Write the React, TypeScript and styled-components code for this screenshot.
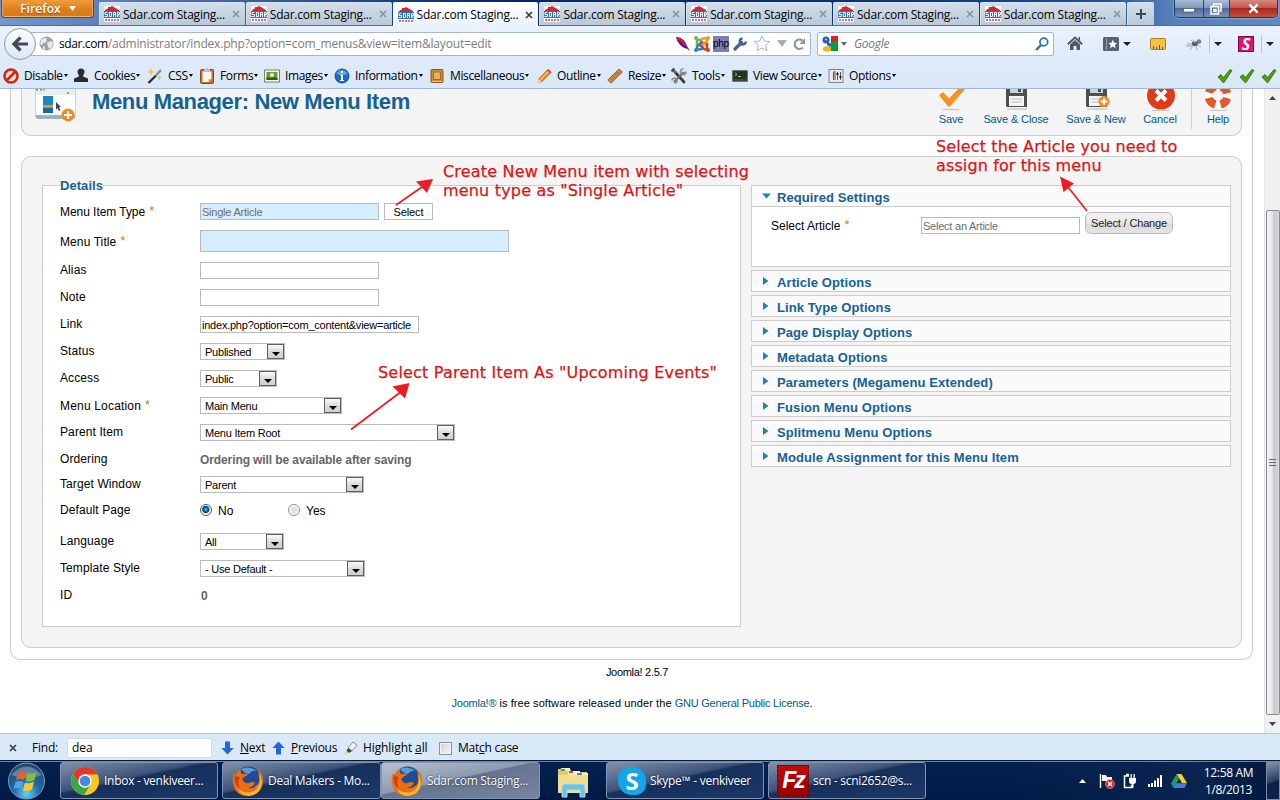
import React from "react";
import styled, { createGlobalStyle, css } from "styled-components";

const UI = `"Open Sans", "Noto Sans", sans-serif`;
const PAGE = `"Liberation Sans", Arial, sans-serif`;

const Global = createGlobalStyle`
  * { box-sizing: border-box; }
  body { margin: 0; background: #fff; overflow: hidden; }
  svg { display: block; flex: none; }
`;

const Screen = styled.div`
  position: relative;
  width: 1280px;
  height: 800px;
  overflow: hidden;
  display: flex;
  flex-direction: column;
  font: 12px/16px ${UI};
  color: #000;
`;

/* ---------- Title bar ---------- */

const TitleBar = styled.div`
  flex: none;
  height: 26px;
  display: flex;
  align-items: flex-start;
  background: linear-gradient(90deg, #7697c8 0, #5f84bd 90px, #2d5594 300px, #04276b 500px, #0b3478 900px, #1d4f97 1100px, #5680ba 1170px, #6289c0 1280px);
  border-bottom: 1px solid #4d6c96;
`;

const FirefoxButton = styled.div`
  width: 93px;
  height: 18px;
  flex: none;
  margin: 0 5px 0 1px;
  padding-left: 18px;
  display: flex;
  align-items: center;
  gap: 8px;
  border: 1px solid #7c3f0c;
  border-top: 0;
  border-radius: 0 0 4px 4px;
  background: linear-gradient(#ee9b3c, #dd7d19 60%, #d9791a);
  box-shadow: inset 0 -1px 0 #f4b566, inset 1px 0 0 #f0a850, inset -1px 0 0 #f0a850;
  color: #fff;
  font-weight: 600;
  letter-spacing: 0.1px;
  text-shadow: 0 1px 1px #8a4a0a;
`;

const Tab = styled.div<{ $active?: boolean }>`
  width: 145.8px;
  flex: none;
  height: ${(p) => (p.$active ? 24 : 23)}px;
  margin: 2px 1px 0 0;
  padding: 0 5px 0 4px;
  display: flex;
  align-items: center;
  border: 1px solid ${(p) => (p.$active ? "#fff" : "#dbe4ee")};
  border-width: 1px 0 0 1px;
  border-radius: 2px 2px 0 0;
  background: ${(p) => (p.$active ? "linear-gradient(#ffffff, #eaf2fc)" : "linear-gradient(#d2deea, #b9c9da)")};
  svg:last-child { opacity: ${(p) => (p.$active ? 1 : 0.42)}; }
`;
const TabTitle = styled.span`
  flex: 1;
  margin-left: 3px;
  white-space: nowrap;
  letter-spacing: -0.23px;
  padding-top: 1px;
`;
const NewTab = styled(Tab)`
  width: 27px;
  padding: 0 0 1px 7px;
  svg:last-child { opacity: 1; }
`;
const WindowControls = styled.div`
  display: flex;
  height: 18px;
  flex: none;
  margin-left: 19px;
  border: 1px solid #20375d;
  border-top: 0;
  border-radius: 0 0 5px 5px;
  overflow: hidden;
  box-shadow: 0 0 2px #cfe0f5;
`;
const ControlButton = styled.div<{ $w: number; $close?: boolean }>`
  width: ${(p) => p.$w}px;
  display: flex;
  align-items: center;
  justify-content: center;
  border-right: 1px solid #2d4569;
  background: ${(p) => (p.$close ? "linear-gradient(#d68a80, #c4594a 45%, #a8281a 50%, #c2503f)" : "linear-gradient(#a9bcd8, #8298ba 45%, #4f6c97 50%, #7890b5)")};
  &:last-child { border: 0; }
`;

/* ---------- Navigation bar ---------- */

const NavBar = styled.div`
  flex: none;
  height: 35px;
  display: flex;
  align-items: center;
  padding-left: 4px;
  background: linear-gradient(#eaf2fd, #deeafa);
`;
const BackButton = styled.div`
  position: relative;
  z-index: 1;
  width: 32px;
  height: 32px;
  flex: none;
  margin: 1px -6px 0 0;
  border-radius: 50%;
  border: 1px solid #8a99ad;
  background: linear-gradient(#fbfdff, #dde7f2);
  display: flex;
  align-items: center;
  justify-content: center;
`;
const Field = styled.div<{ $w: number }>`
  width: ${(p) => p.$w}px;
  height: 24px;
  display: flex;
  align-items: center;
  background: #fff;
  border: 1px solid #a5b7cd;
  border-radius: 2px;
`;
const UrlField = styled(Field)`
  margin-right: 6px;
  padding: 0 4px 0 8px;
`;
const UrlText = styled.span`
  flex: 1;
  margin-left: 5px;
  padding-top: 1px;
  color: #7c7c7c;
  letter-spacing: -0.175px;
  white-space: nowrap;
`;
const Host = styled.span`
  color: #000;
  letter-spacing: -0.4px;
`;
const UrlIcons = styled.div`
  display: flex;
  align-items: center;
  gap: 3px;
`;
const SearchField = styled(Field)`
  padding: 0 4px;
  margin-right: 13px;
`;
const SearchHint = styled.span`
  flex: 1;
  margin-left: 7px;
  padding-top: 1px;
  font-style: italic;
  color: #777;
  letter-spacing: -0.3px;
`;
const NavIcon = styled.div<{ $ml?: number }>`
  margin-left: ${(p) => p.$ml ?? 0}px;
`;
const NavSep = styled.div<{ $ml: number; $mr: number }>`
  width: 1px;
  height: 18px;
  background: #b9c5d4;
  margin: 0 ${(p) => p.$mr}px 0 ${(p) => p.$ml}px;
`;

/* ---------- Developer toolbar ---------- */

const DevBar = styled.div`
  flex: none;
  height: 28px;
  display: flex;
  align-items: center;
  padding: 2px 0 0 3px;
  background: linear-gradient(#deeafa, #d9e8f7);
  border-bottom: 1px solid #a3bad6;
`;
const DevItem = styled.div<{ $w: number }>`
  width: ${(p) => p.$w}px;
  flex: none;
  display: flex;
  align-items: center;
  white-space: nowrap;
  letter-spacing: -0.36px;
`;
const DevLabel = styled.span`
  margin: 0 1px 0 5px;
`;
const Checks = styled.div`
  display: flex;
  gap: 6px;
  margin-left: auto;
  padding-right: 3px;
`;

/* ---------- Page ---------- */

const Viewport = styled.div`
  height: 644px;
  flex: none;
  display: flex;
  background: #fff;
  font-family: ${PAGE};
  line-height: 14px;
`;
const Scroller = styled.div`
  flex: 1;
  overflow: hidden;
`;
const PageBox = styled.div`
  width: 1243px;
  height: 571px;
  margin-left: 10px;
  border: 1px solid #ccc;
  border-top: 0;
  border-radius: 0 0 10px 10px;
  padding: 0 10px;
  background: linear-gradient(#fafafa 0 47px, #fff 47px);
`;
const Header = styled.div`
  height: 47px;
  display: flex;
  border: 1px solid #ccc;
  border-top: 0;
  border-radius: 0 0 10px 10px;
  background: #f4f4f4;
  padding: 0 3px 0 12px;
`;
const PageTitle = styled.h1`
  margin: 0 auto 0 14px;
  font: bold 22px/26px ${PAGE};
  letter-spacing: -0.36px;
  color: #146295;
`;
const ToolButton = styled.div<{ $w: number }>`
  width: ${(p) => p.$w}px;
  display: flex;
  flex-direction: column;
  align-items: center;
  font-size: 11px;
  letter-spacing: -0.12px;
  color: #025a8d;
  white-space: nowrap;
`;
const ToolSep = styled.div`
  width: 1px;
  height: 40px;
  background: #ccc;
  margin: 0 6px 0 7px;
`;
const Main = styled.div`
  display: flex;
  align-items: flex-start;
  gap: 10px;
  height: 492px;
  margin-top: 20px;
  padding: 21px 0 0 20px;
  border: 1px solid #ccc;
  border-radius: 10px;
  background: #f4f4f4;
`;
const Details = styled.fieldset`
  width: 699px;
  height: 449px;
  margin: 0;
  padding: 6px 17px 0;
  border: 1px solid #ccc;
  background: #fff;
`;
const Legend = styled.legend`
  height: 14px;
  padding: 0;
  font: bold 13px/15px ${PAGE};
  letter-spacing: 0.05px;
  color: #146295;
`;
const FormRow = styled.div<{ $h: number; $up?: number }>`
  height: ${(p) => p.$h}px;
  padding-bottom: ${(p) => p.$up ?? 0}px;
  display: flex;
  align-items: center;
`;
const Label = styled.label<{ $w?: number; $ls?: number; $req?: boolean }>`
  width: ${(p) => p.$w ?? 140}px;
  flex: none;
  font-size: 12px;
  letter-spacing: ${(p) => p.$ls ?? 0.1}px;
  padding: ${(p) => (p.$req ? "1px 0 0" : "0 0 1px")};
`;
const Star = styled.span`
  color: #e77600;
  margin-left: 4px;
  font-size: 13px;
  line-height: 0;
  vertical-align: 1px;
  letter-spacing: 0;
`;
const inputFont = css`
  font: 11px/15px ${PAGE};
  letter-spacing: -0.23px;
  white-space: nowrap;
`;
const TextBox = styled.div<{ $w: number; $h?: number; $req?: boolean; $muted?: boolean }>`
  ${inputFont}
  width: ${(p) => p.$w}px;
  height: ${(p) => p.$h ?? 17}px;
  padding: 1px 1px 0;
  border: 1px solid #bbb;
  background: ${(p) => (p.$req ? "#d5eeff" : "#fff")};
  color: ${(p) => (p.$muted ? "#6d6d6d" : "#000")};
`;
const PlainButton = styled.div`
  ${inputFont}
  letter-spacing: -0.1px;
  width: 49px;
  height: 17px;
  margin-left: 5px;
  border: 1px solid #bbb;
  background: #fff;
  text-align: center;
  padding-top: 1px;
`;
const SelectBox = styled.div<{ $w: number }>`
  ${inputFont}
  width: ${(p) => p.$w}px;
  height: 17px;
  padding-left: 4px;
  display: flex;
  align-items: center;
  justify-content: space-between;
  border: 1px solid #bbb;
`;
const SelectText = styled.span`
  padding-top: 2px;
`;
const DropArrow = styled.span`
  width: 17px;
  height: 15px;
  border: 1px solid #5f5f5f;
  background: linear-gradient(#fafafa, #dcdcdc 50%, #cfcfcf);
  display: flex;
  align-items: center;
  justify-content: center;
  padding-top: 4px;
`;
const Muted = styled.span<{ $ls: number; $pl?: number }>`
  padding: 1px 0 0 ${(p) => p.$pl ?? 0}px;
  font-weight: bold;
  font-size: 12px;
  color: #666;
  letter-spacing: ${(p) => p.$ls}px;
`;
const Radio = styled.span<{ $on?: boolean }>`
  width: 12px;
  height: 12px;
  margin-top: -1px;
  border-radius: 50%;
  border: 1px solid ${(p) => (p.$on ? "#4b5a68" : "#8e8f8f")};
  background: ${(p) =>
    p.$on
      ? "radial-gradient(circle at 48% 45%, #6cd2f5 0, #167cb4 1.6px, #0b3f63 3.2px, #e4ebee 4px, #fff 5px)"
      : "radial-gradient(circle at 50% 50%, #dadada 0, #e6e6e6 3px, #fff 5px)"};
`;
const RadioLabel = styled.span<{ $w: number }>`
  width: ${(p) => p.$w}px;
  padding-left: 6px;
`;

const Side = styled.div`
  width: 480px;
  margin-top: 7px;
  display: flex;
  flex-direction: column;
  gap: 3px;
`;
const Panel = styled.div<{ $open?: boolean }>`
  height: ${(p) => (p.$open ? 82 : 22)}px;
  border: 1px solid #ccc;
  background: ${(p) => (p.$open ? "#fff" : "#fafafa")};
`;
const PanelHead = styled.div<{ $open?: boolean }>`
  height: ${(p) => (p.$open ? 21 : 20)}px;
  display: flex;
  align-items: center;
  padding: 1px 0 0 10px;
  background: #fafafa;
  border-bottom: ${(p) => (p.$open ? "1px solid #ccc" : "0")};
`;
const PanelTitle = styled.span`
  margin-left: 6px;
  font: bold 13px/17px ${PAGE};
  letter-spacing: 0.09px;
  color: #146295;
  padding-top: 1px;
`;
const PanelRow = styled.div`
  display: flex;
  align-items: center;
  height: 37px;
  padding: 10px 0 10px 19px;
`;
const RoundButton = styled.div`
  width: 88px;
  height: 22px;
  margin: -5px 0 0 5px;
  border: 1px solid #bbb;
  border-radius: 6px;
  background: linear-gradient(#f2f2f2, #e9e9e9 50%, #dbdbdb 55%, #e4e4e4);
  font-size: 11px;
  line-height: 21px;
  letter-spacing: -0.15px;
  text-align: center;
  color: #222;
`;
const Footer = styled.div`
  width: 1264px;
  padding-top: 5px;
  text-align: center;
  font-size: 11px;
`;
const Version = styled.p`
  margin: 0 0 17px 10px;
  letter-spacing: -0.3px;
`;
const License = styled.p`
  margin: 0;
  letter-spacing: 0.08px;
`;
const Link = styled.a`
  color: #025a8d;
  letter-spacing: -0.23px;
`;

const ScrollBar = styled.div`
  width: 16px;
  height: 644px;
  display: flex;
  flex-direction: column;
  align-items: center;
  background: #f0f0f0;
  border-left: 1px solid #e6e6e6;
`;
const ScrollEnd = styled.div<{ $h: number }>`
  height: ${(p) => p.$h}px;
  padding-top: 7px;
`;
const Thumb = styled.div`
  width: 14px;
  height: 505px;
  border: 1px solid #8b8b8f;
  border-radius: 2px;
  background: linear-gradient(90deg, #f5f5f6, #e6e6e9 45%, #c9c9ce 55%, #d8d8dc);
  display: flex;
  align-items: center;
  justify-content: center;
`;

/* ---------- Find bar ---------- */

const FindBar = styled.div`
  flex: none;
  height: 27px;
  border-top: 1px solid #b7c3d0;
  background: #dae9f8;
  display: flex;
  align-items: center;
  padding: 2px 0 0 9px;
  white-space: nowrap;
`;
const FindText = styled.span<{ $w: number; $pl?: number; $ls?: number }>`
  width: ${(p) => p.$w}px;
  padding-left: ${(p) => p.$pl ?? 0}px;
  letter-spacing: ${(p) => p.$ls ?? -0.25}px;
`;
const FindInput = styled.div`
  width: 145px;
  height: 20px;
  margin-right: 9px;
  padding: 1px 4px;
  border: 1px solid #d4dbe3;
  border-radius: 2px;
  background: #fff;
`;
const CheckBox = styled.div`
  width: 13px;
  height: 13px;
  margin: 0 6px 0 -2px;
  border: 1px solid #8e8f8f;
  background: linear-gradient(135deg, #cfd3d7, #f4f4f4);
  box-shadow: inset 0 0 0 1px #f4f4f4;
`;

/* ---------- Task bar ---------- */

const TaskBar = styled.div`
  flex: none;
  height: 40px;
  display: flex;
  background: linear-gradient(90deg, rgba(0, 24, 66, 0) 1000px, #0a2450 1200px, #001840), linear-gradient(#03214f, #001a45);
  border-top: 1px solid #0a1a33;
  box-shadow: inset 0 1px 0 #6f87ab;
  color: #fff;
`;
const Start = styled.div`
  width: 60px;
  padding: 1px 0 0 7px;
`;
const Task = styled.div<{ $w: number; $mr?: number; $active?: boolean }>`
  width: ${(p) => p.$w}px;
  height: 37px;
  margin: 1px ${(p) => p.$mr ?? 0}px 0 0;
  padding-left: 9px;
  display: flex;
  align-items: center;
  gap: 4px;
  border: 1px solid #7f93b3;
  border-radius: 3px;
  background: ${(p) =>
    p.$active
      ? "linear-gradient(168deg, #b8c1cf 0, #8d9ab0 45%, #66758f 47%, #7684a0 100%)"
      : "linear-gradient(168deg, #8190aa 0, #3c5379 42%, #17305c 46%, #1c3868 100%)"};
  white-space: nowrap;
  letter-spacing: -0.28px;
  text-shadow: 0 0 2px #001a45;
`;
const Explorer = styled.div`
  width: 66px;
  padding: 5px 0 0 16px;
`;
const Tray = styled.div`
  margin-left: auto;
  display: flex;
  align-items: center;
`;
const TrayIcon = styled.div<{ $ml: number }>`
  margin-left: ${(p) => p.$ml}px;
`;
const Clock = styled.div`
  width: 79px;
  padding-left: 4px;
  text-align: center;
  line-height: 17px;
  letter-spacing: -0.35px;
`;
const ShowDesktop = styled.div`
  width: 14px;
  height: 38px;
  border: 1px solid #7d8ba3;
  background: linear-gradient(160deg, #8592a8, #2b3f63 50%, #0e2248 55%);
`;

/* ---------- Annotations lying over the page ---------- */

const Note = styled.div<{ $x: number; $y: number; $ls: number }>`
  position: absolute;
  left: ${(p) => p.$x}px;
  top: ${(p) => p.$y}px;
  font: 16px/19px "DejaVu Sans", Verdana, sans-serif;
  letter-spacing: ${(p) => p.$ls}px;
  -webkit-text-stroke: 0.25px #dc1414;
  white-space: pre;
  color: #dc1414;
`;
const Arrows = styled.svg`
  position: absolute;
  left: 0;
  top: 0;
  pointer-events: none;
`;

/* ---------- Icons ---------- */

const Favicon = () => (
  <svg width="16" height="16" viewBox="0 0 16 16">
    <path fill="#fff" d="M0 0h16v16H0z" />
    <path fill="#cc2936" d="M8 0l7 4v1H1V4zM4 1h2v3H4z" />
    <path fill="#2a76c8" d="M0 5h16v7H0z" />
    <path stroke="#fff" fill="none" strokeWidth=".9" d="M3.500 6.500H1v2h2.500v2H.5M5.500 6v5M5.500 6.500h2v4h-2M9.500 11V6.500h2V11M9.500 8.500h2M13.500 11V6.500h2v2h-2l2 2.500" />
    <path stroke="#d8404c" strokeWidth="1.600" strokeDasharray="2 1" d="M1 14h14" />
  </svg>
);
const Cross = ({ c = "#3d3d3d", s = 8 }: { c?: string; s?: number }) => (
  <svg width={s} height={s} viewBox="0 0 8 8">
    <path d="M1 1l6 6M7 1L1 7" stroke={c} strokeWidth="1.700" />
  </svg>
);
const Tri = ({ w = 7, h = 4, c = "#222", up = false }: { w?: number; h?: number; c?: string; up?: boolean }) => (
  <svg width={w} height={h} viewBox="0 0 10 10" preserveAspectRatio="none">
    <path d={up ? "M0 10h10L5 0z" : "M0 0h10L5 10z"} fill={c} />
  </svg>
);
const BackArrow = () => (
  <svg width="18" height="18" viewBox="0 0 18 18">
    <path d="M9.500 2.500L3 9l6.500 6.500M3.500 9H17" fill="none" stroke="#414b57" strokeWidth="3.200" />
  </svg>
);
const Globe = () => (
  <svg width="15" height="15" viewBox="0 0 15 15">
    <circle cx="7.500" cy="7.500" r="7" fill="#a2a2a2" />
    <path fill="#e9e9e9" d="M2 4l3-2 3 0-1 2 1 1-2 2-2 0-1 2-2-1zM9 6l4-1 1 3-2 4-2 1-1-3-1-2zM4 10l2 1 0 3-2-1z" />
  </svg>
);
const Feather = () => (
  <svg width="16" height="16" viewBox="0 0 16 16">
    <path d="M1 1c5 0 9 3 11 9l3 5-4-3C6 11 2 6 1 1z" fill="#7a1278" />
    <path d="M2 2c3 1 6 4 8 8" stroke="#d8232f" strokeWidth="2" fill="none" />
    <path d="M5 7c2 3 4 4 6 5" stroke="#3b1a8c" strokeWidth="1.500" fill="none" />
  </svg>
);
const JoomlaLogo = () => (
  <svg width="16" height="16" viewBox="0 0 16 16" fill="none" strokeWidth="2.600">
    <path d="M3 9V5q0-2 3-1l5 5" stroke="#7ab648" />
    <path d="M7 3.500q5-2.500 6 0V5l-5.500 5.500" stroke="#f8981d" />
    <path d="M13 7v5q-1 2-3 1L5 8" stroke="#e0372c" />
    <path d="M9 12.500q-5 2-6 0v-2L8.500 5.500" stroke="#2f7fc4" />
    <g fill="#f8981d" stroke="none"><circle cx="14" cy="2" r="2" /><circle cx="2" cy="2" r="2" fill="#7ab648" /><circle cx="2" cy="14" r="2" fill="#2f7fc4" /><circle cx="14" cy="14" r="2" fill="#e0372c" /></g>
  </svg>
);
const PhpBadge = styled.span`
  width: 16px;
  height: 16px;
  background: #7b7fb8;
  font: 10px/15px "Liberation Sans", sans-serif;
  letter-spacing: -0.3px;
  text-align: center;
  color: #000;
`;
const Wrench = () => (
  <svg width="16" height="16" viewBox="0 0 16 16">
    <path d="M3 13l6.500-6.500" stroke="#43618c" strokeWidth="3.200" strokeLinecap="round" />
    <path d="M13.800 5.500A3 3 0 1 1 10.500 2.500" stroke="#43618c" strokeWidth="2.400" fill="none" />
  </svg>
);
const StarIcon = () => (
  <svg width="18" height="17" viewBox="0 0 18 17">
    <path d="M9 1l2.300 5 5.400.6-4 3.700 1.100 5.300L9 13l-4.800 2.600 1.100-5.300-4-3.700 5.400-.6z" fill="#fdfdfd" stroke="#b0b4b9" />
  </svg>
);
const Reload = () => (
  <svg width="13" height="14" viewBox="0 0 13 14">
    <path d="M9.800 10.500A4.700 4.700 0 1 1 9.500 3.600" fill="none" stroke="#8b96a3" strokeWidth="2.200" />
    <path d="M12 1v6H6.500z" fill="#8b96a3" />
  </svg>
);
const GoogleIcon = () => (
  <svg width="16" height="16" viewBox="0 0 16 16">
    <path fill="#fff" d="M0 0h16v16H0z" />
    <path fill="#e3201b" d="M9 0h7v6H9z" />
    <path fill="#0c9a3a" d="M9 6h7v9H9q-2-2 0-5z" />
    <circle cx="4" cy="4" r="3.500" fill="#1a62c9" />
    <path fill="#1a62c9" d="M5 6l5 2-2 3-3-2z" />
    <ellipse cx="5" cy="13" rx="4" ry="2.700" fill="#f5b50f" />
    <circle cx="4" cy="3.500" r="1" fill="#bcd6f7" />
  </svg>
);
const Magnifier = () => (
  <svg width="14" height="14" viewBox="0 0 14 14" fill="none" stroke="#2f6fae">
    <circle cx="8.800" cy="5" r="3.900" strokeWidth="1.700" />
    <path d="M6 8l-4.800 5" strokeWidth="2.300" />
  </svg>
);
const Home = () => (
  <svg width="16" height="15" viewBox="0 0 16 15">
    <path d="M.8 8.200L8 1.500l7.200 6.700" fill="none" stroke="#4d5a68" strokeWidth="1.900" />
    <path d="M3 8.500L8 4l5 4.500V14H9.500v-4h-3v4H3zM11.500 1H13v4l-1.500-1.500z" fill="#4d5a68" />
  </svg>
);
const Bookmarks = () => (
  <svg width="16" height="14" viewBox="0 0 16 14">
    <rect width="16" height="14" rx="1.500" fill="#56626f" />
    <path d="M3.500 1v12" stroke="#95a0ac" />
    <path d="M9.800 2.800l1.300 2.900 3.100.3-2.300 2.100.7 3.100-2.800-1.600L7 11.200l.7-3.100L5.400 6l3.100-.3z" fill="#fff" />
  </svg>
);
const Ruler = () => (
  <svg width="16" height="12" viewBox="0 0 16 12">
    <rect x=".5" y=".5" width="15" height="11" rx="1" fill="#f6c244" stroke="#b07a13" />
    <path d="M3.500 11V8M6.500 11V9M9.500 11V7M12.500 11V9" stroke="#7a4f06" />
  </svg>
);
const Fly = () => (
  <svg width="16" height="14" viewBox="0 0 16 14">
    <path d="M1 6l5 1M0 9l6-1M4 13l3-4M10 9l1 4M12 8l3 2M5 3l3 3" stroke="#999" strokeWidth=".8" />
    <ellipse cx="5" cy="8" rx="4" ry="2" fill="#c4c6c4" />
    <ellipse cx="9" cy="6.500" rx="3" ry="2.600" fill="#5a5d5b" />
    <circle cx="13" cy="4.500" r="2.300" fill="#7a7d7a" />
    <path d="M6 2l4 2-1 2z" fill="#c7cac7" />
  </svg>
);
const SBadge = styled.span`
  display: block;
  width: 16px;
  height: 16px;
  border: 1px solid #7a0a3d;
  background: #e5116c;
  color: #fff;
  font: italic bold 16px/14px "Open Sans", sans-serif;
  text-align: center;
`;
const Svg16 = ({ children }: { children: React.ReactNode }) => (
  <svg width="16" height="16" viewBox="0 0 16 16">{children}</svg>
);
const DisableIcon = () => (
  <Svg16>
    <circle cx="8" cy="8" r="6.500" fill="#f8e3de" stroke="#d3260e" strokeWidth="2.600" />
    <path d="M12.500 3.500l-9 9" stroke="#d3260e" strokeWidth="2.600" />
  </Svg16>
);
const CookiesIcon = () => (
  <Svg16><path fill="#2c2c2c" d="M4.500 4a3.500 3.500 0 0 1 7 0c0 2-1.500 2.500-1.500 4.500l5 2V14H1v-3.500l5-2C6 6.500 4.500 6 4.500 4z" /></Svg16>
);
const WandIcon = () => (
  <Svg16>
    <path d="M1.500 15L9 7.500" stroke="#222" strokeWidth="2.200" />
    <path d="M8.500 8l5.500-6" stroke="#8d8d8d" strokeWidth="2.400" />
    <path fill="#f2c52d" d="M4 0l1 3 3 1-3 1-1 3-1-3-3-1 3-1zM12.500 7l.8 2 2 .8-2 .8-.8 2-.8-2-2-.8 2-.8z" />
  </Svg16>
);
const FormsIcon = () => (
  <Svg16>
    <rect x="1.500" y="1.500" width="13" height="14" rx="1" fill="#c4702a" stroke="#8d4a13" />
    <path fill="#f4f4f4" d="M3.500 3.500h9V11l-3 3h-6z" />
    <path fill="#bdbdbd" d="M5 1h1.500L8-.5 9.500 1H11v3H5zM9.500 14v-3h3z" />
  </Svg16>
);
const ImagesIcon = () => (
  <Svg16>
    <rect x=".5" y="2" width="15" height="12" fill="#f6f6f0" stroke="#77826c" />
    <path fill="#6d9c2f" d="M2.500 4h11v8h-11z" />
    <path fill="#375c14" d="M2.500 9l4 1 4-1 3 1v2h-11z" />
    <circle cx="8" cy="7" r="2" fill="#e9f0c9" />
  </Svg16>
);
const InfoIcon = () => (
  <Svg16>
    <circle cx="8" cy="8" r="7" fill="#1a6dc2" stroke="#0e4f96" />
    <path d="M2.500 6a5.800 5.800 0 0 1 11 0q-5 2-11 0z" fill="#5ba0e0" />
    <path fill="#fff" d="M7 3h2v2H7zM6 6.500h3V12h1v1H6v-1h1V7.500H6z" />
  </Svg16>
);
const MiscIcon = () => (
  <Svg16>
    <rect x="2" y="1.500" width="12" height="13" rx="1" fill="#d08c36" stroke="#8f5512" />
    <rect x="4.500" y="4" width="7" height="7.500" fill="#e6b163" stroke="#a56a1f" />
    <path d="M3 13.500h10" stroke="#f0cb8c" />
  </Svg16>
);
const PencilIcon = () => (
  <Svg16>
    <path d="M2 14.500l1-4L12 1.500l3 3L6 13.500z" fill="#e88a22" stroke="#a9580e" strokeWidth=".8" />
    <path d="M4.500 11.500l8.500-8.500" stroke="#ffc77a" strokeWidth="1.300" />
    <path d="M1.500 15l1.200-4 2.800 2.800z" fill="#f2dfc2" />
    <path d="M11 2.500l3 3 1.300-1.300q0-2-2.800-3z" fill="#d9534a" />
  </Svg16>
);
const ResizeIcon = () => (
  <Svg16>
    <path d="M.8 12L12 1l3.300 3L4 15.200z" fill="#cf8a45" stroke="#96591f" />
    <path d="M4 10.500l1 1M6 8.500l1.500 1.500M8 6.500l1 1M10 4.500l1.500 1.500" stroke="#7a4515" />
  </Svg16>
);
const ToolsIcon = () => (
  <Svg16>
    <path d="M4 4l9 10" stroke="#3a3a3a" strokeWidth="2.800" strokeLinecap="round" />
    <path d="M1 1l4 4M13 4L3 14" stroke="#6d6d6d" strokeWidth="2.200" />
    <path d="M15 3.500A2.800 2.800 0 1 1 12.500 1M1 12.500A2.500 2.500 0 1 1 3.500 15" fill="none" stroke="#8b8b8b" strokeWidth="1.700" />
    <path d="M.5 3.500l3-3" stroke="#444" strokeWidth="2" />
  </Svg16>
);
const SourceIcon = () => (
  <Svg16>
    <rect x=".5" y="2.500" width="15" height="11" rx="1" fill="#26331f" stroke="#6c6f72" strokeWidth="1.200" />
    <path d="M3 5l2 1.500L3 8M6 8.500h3" stroke="#8fce74" fill="none" />
    <path d="M2 12h12" stroke="#54604d" />
  </Svg16>
);
const OptionsIcon = () => (
  <Svg16>
    <rect x="1" y="1.500" width="14" height="13" fill="#e9e9e9" stroke="#858585" />
    <path d="M5.500 12V5q0-1.500 1.500-1.500V12M9.500 4v8M12.500 4v8" stroke="#555" fill="none" />
    <path d="M8.500 6h2M11.500 9h2" stroke="#222" strokeWidth="2" />
  </Svg16>
);
const CheckIcon = () => (
  <Svg16><path d="M1 9l3-2.500 2.500 3L13 1.500l2 1L7 14.500H6z" fill="#4fa00d" stroke="#2c6a06" strokeWidth=".8" /></Svg16>
);

const MenuItemIcon = () => (
  <svg width="44" height="36" viewBox="0 0 44 36">
    <path d="M1.500 0h40v27q0 3-3 3h-34q-3 0-3-3z" fill="#a4b0b9" />
    <path d="M2 0h39v6H2z" fill="#e8edf0" />
    <path d="M2 6h39v20H2z" fill="#fcfdfd" />
    <path d="M2 0h2v1.500H2zM6 0h2v1.500H6z" fill="#4fa83d" /><path d="M9 0h2v1.500H9z" fill="#f0932b" />
    <path d="M33 3h2v2h-2z" fill="#8cba3f" />
    <path d="M9 7h10v9H9z" fill="#1c86bd" /><path d="M9 16h10v2.500H9z" fill="#f39a1e" /><path d="M9 18.500h10V24H9z" fill="#0e6ea3" />
    <path d="M22 13l5 5-2 .3 1.500 3-1.500.7-1.500-3-1.500 1.500z" fill="#444" />
    <circle cx="34" cy="26" r="6.500" fill="#f28c1b" />
    <path d="M34 22v8M30 26h8" stroke="#fff" strokeWidth="2.200" />
  </svg>
);
const SaveIcon = () => (
  <svg width="32" height="23" viewBox="0 0 32 23">
    <path d="M8 20.500h16" stroke="#ccc" strokeWidth="1.500" />
    <path d="M4 6l4-3 6 6.500L25-2l6 1-16 18.500h-2z" fill="#f7941e" />
  </svg>
);
const Floppy = ({ plus = false }: { plus?: boolean }) => (
  <svg width="32" height="23" viewBox="0 0 32 23">
    <path d="M7 20h20" stroke="#ccc" strokeWidth="1.500" />
    <path d="M6 0h21v18H7l-1-1z" fill="#4d4f53" />
    <path d="M10-2h13v6H10z" fill="#cfd1d4" /><path d="M18 0h3v3h-3z" fill="#4d4f53" />
    <path d="M9 7h15v10H9z" fill="#f4f5f6" /><path d="M11 10h11M11 13h11" stroke="#b9bcc0" />
    {plus && (<g><circle cx="24" cy="12.500" r="5.500" fill="#f28c1b" /><path d="M24 9.200v6.600M20.700 12.500h6.600" stroke="#fff" strokeWidth="2" /></g>)}
  </svg>
);
const CancelIcon = () => (
  <svg width="32" height="23" viewBox="0 0 32 23">
    <path d="M8 21.500h17" stroke="#ccc" strokeWidth="1.200" />
    <circle cx="17" cy="6.500" r="14" fill="#e03a17" />
    <path d="M12 1.500l10 10M22 1.500l-10 10" stroke="#fff" strokeWidth="4" />
  </svg>
);
const HelpIcon = () => (
  <svg width="32" height="23" viewBox="0 0 32 23">
    <path d="M8 21.500h17" stroke="#ccc" strokeWidth="1.200" />
    <circle cx="16" cy="6.500" r="9.500" fill="none" stroke="#fff" strokeWidth="8" />
    <circle cx="16" cy="6.500" r="9.500" fill="none" stroke="#e2582a" strokeWidth="8" strokeDasharray="9.500 5.420" strokeDashoffset="-2.700" />
  </svg>
);
const Caret = ({ open = false }: { open?: boolean }) => (
  <svg width="9" height="9" viewBox="0 0 9 9">
    <path d={open ? "M0 1.500h9L4.500 6.500z" : "M1 0v8l5.500-4z"} fill="#1b86ad" />
  </svg>
);
const Grip = () => (
  <svg width="8" height="8" viewBox="0 0 8 8"><path d="M0 .5h7M0 3.500h7M0 6.500h7" stroke="#6a6a70" /></svg>
);
const BlueArrow = ({ up = false }: { up?: boolean }) => (
  <svg width="13" height="14" viewBox="0 0 13 14">
    <path transform={up ? "rotate(180 6.500 7)" : undefined} d="M4 .5h5V7h3.700L6.500 13.500.3 7H4z" fill="#2468d8" />
  </svg>
);
const Highlighter = () => (
  <svg width="14" height="14" viewBox="0 0 14 14">
    <path d="M4 7l5-6 4 3-5 6z" fill="#f5f5f5" stroke="#777" strokeWidth=".8" />
    <path d="M2.500 10L4 7l4 3-3 2z" fill="#444" /><path d="M.5 13l2-3L5 12z" fill="#e7c94a" />
  </svg>
);
const StartOrb = () => (
  <svg width="39" height="38" viewBox="0 0 39 38">
    <defs><radialGradient id="orb" cx=".5" cy=".85" r=".8"><stop offset="0" stopColor="#5fd4fa" /><stop offset=".45" stopColor="#1d6aa8" /><stop offset="1" stopColor="#26466c" /></radialGradient></defs>
    <circle cx="19.500" cy="19" r="18" fill="url(#orb)" stroke="#7f9dbb" />
    <path d="M4 13Q19.500-4 35 13q-15 6-31 0z" fill="#fff" opacity=".28" />
    <path d="M11 11q4-3 8-1l-2 8q-4-2-8 0z" fill="#e8632b" /><path d="M20.500 11q4 2 9-1l-2 8q-5 3-9 1z" fill="#86bd3c" />
    <path d="M8.500 20q4-2 8 0l-2 7q-4-2-8 0z" fill="#4aa7e3" /><path d="M18 20.500q4 2 9-1l-2 8q-5 3-9 1z" fill="#fbc92c" />
  </svg>
);
const Chrome = () => (
  <svg width="30" height="30" viewBox="0 0 30 30">
    <circle cx="15" cy="15" r="14" fill="#fbc91c" />
    <path d="M2.900 8A14 14 0 0 1 27.500 8.500H15L9 18z" fill="#dd3b2c" />
    <path d="M2.900 8A14 14 0 0 0 14 29l6.500-10.500L10 19z" fill="#3aa648" />
    <circle cx="15" cy="15" r="6.700" fill="#fff" /><circle cx="15" cy="15" r="5.300" fill="#4388e0" />
  </svg>
);
const FirefoxLogo = () => (
  <svg width="32" height="32" viewBox="0 0 32 32">
    <circle cx="16.500" cy="15" r="13.500" fill="#234a94" />
    <path d="M9 4q8-4 16 2-5-1-8 3-4 0-8-5z" fill="#5b9bd8" />
    <path d="M2 8q1 2 2 1 2-4 5-5-1 3 1 5 4-1 6 1l-4 2q-1 2-2 2 2 5 7 4 3-2 6 0-2 4-7 5 8 1 11-6 2-7-2-13 7 5 6 13-2 13-15 14Q3 31 1 18q-1-6 1-10z" fill="#e8701a" />
    <path d="M26 8q5 12-4 18-8 4-16-2 3 7 11 7 11-1 13-12 0-6-4-11z" fill="#f9b52c" />
    <path d="M3 10q-2 9 5 14-3-7 0-12-3 0-5-2z" fill="#c9421a" />
  </svg>
);
const FolderIcon = () => (
  <svg width="34" height="32" viewBox="0 0 34 32">
    <path d="M2 3h12l2 3h15v20H2z" fill="#e3c968" /><path d="M5 2h9v3H5z" fill="#f8efc1" />
    <path d="M5 3h4v2H5z" fill="#35a845" /><path d="M12 5h12v4H12z" fill="#f8efc1" /><path d="M13 5h4v2h-4z" fill="#d7432c" /><path d="M19 7h13v5H19z" fill="#fbf6d9" /><path d="M21 7h5v2h-5z" fill="#2e8fd4" />
    <path d="M2 9h30v18H2z" fill="#f3dd8c" />
    <path d="M6 31V21q0-3 3-3h17q3 0 3 3v10h-5v-7H11v7z" fill="#6ec1e6" stroke="#a9dcf2" />
  </svg>
);
const SkypeBadge = styled.span`
  width: 28px;
  height: 28px;
  margin-left: 2px;
  border-radius: 12px 14px 10px 14px;
  background: #12a5e8;
  color: #fff;
  font: bold 24px/27px "Open Sans", sans-serif;
  text-align: center;
  text-shadow: none;
`;
const FileZillaBadge = styled.span`
  width: 32px;
  height: 32px;
  margin-left: -1px;
  border: 1px dashed #4a1020;
  background: linear-gradient(#c30a0a, #970000);
  color: #fff;
  font: italic bold 23px/29px "Liberation Sans", sans-serif;
  letter-spacing: -2px;
  text-align: center;
  text-shadow: none;
`;
const FlagIcon = () => (
  <svg width="16" height="16" viewBox="0 0 16 16">
    <path d="M1.500 1v14" stroke="#fff" strokeWidth="1.400" /><path d="M3 2h4l1 2h5v7H8L7 8H3z" fill="#f4f4f4" />
    <circle cx="11" cy="11" r="4.500" fill="#d6241d" stroke="#f1b0ac" strokeWidth=".6" /><path d="M9 9l4 4M13 9l-4 4" stroke="#fff" strokeWidth="1.500" />
  </svg>
);
const PowerIcon = () => (
  <svg width="14" height="16" viewBox="0 0 14 16">
    <path d="M6 3H1.500v11.500h7V12M3 1.500h3" fill="none" stroke="#fff" strokeWidth="1.500" />
    <path d="M6 5h7v3q0 3-2.500 3v4h-2v-4Q6 11 6 8zM7.500 1h1.300v4H7.500zM10.500 1h1.300v4h-1.300z" fill="#fff" />
  </svg>
);
const SignalIcon = () => (
  <svg width="15" height="12" viewBox="0 0 15 12"><path fill="#fff" d="M0 9h2v3H0zM3 8h2v4H3zM6 5.500h2V12H6zM9 3h2v9H9zM12 0h2v12h-2z" /></svg>
);
const DriveIcon = () => (
  <svg width="16" height="14" viewBox="0 0 16 14">
    <path d="M5.500 0h5L16 9h-5z" fill="#fbcb36" /><path d="M5.500 0L8 4.500 2.500 14 0 9.500z" fill="#1a9c55" /><path d="M5.200 9.300H16L13.500 14h-11z" fill="#3f7ee8" />
  </svg>
);

const MinIcon = () => (<svg width="12" height="8" viewBox="0 0 12 8"><rect x=".5" y="3.500" width="11" height="3.500" fill="#fff" stroke="#4a5a74" strokeWidth=".8" /></svg>);
const RestoreIcon = () => (
  <svg width="12" height="12" viewBox="0 0 12 12" fill="none" stroke="#fff" strokeWidth="1.500"><path d="M3.500 2.500V1H11v7H9.500M1 3.500h7.500V11H1zM4 6.500h2v2H4z" /></svg>
);
const PlusIcon = () => (<svg width="12" height="12" viewBox="0 0 12 12"><path d="M6 1v10M1 6h10" stroke="#3b4654" strokeWidth="2" /></svg>);

/* ---------- Data ---------- */

const TABS = [0, 1, 2, 3, 4, 5, 6];
const DEV: [string, number, React.FC][] = [
  ["Disable", 70, DisableIcon], ["Cookies", 74, CookiesIcon], ["CSS", 52, WandIcon], ["Forms", 65, FormsIcon],
  ["Images", 70, ImagesIcon], ["Information", 95, InfoIcon], ["Miscellaneous", 107, MiscIcon], ["Outline", 71, PencilIcon],
  ["Resize", 64, ResizeIcon], ["Tools", 61, ToolsIcon], ["View Source", 96, SourceIcon], ["Options", 90, OptionsIcon],
];
const PANELS = ["Article Options", "Link Type Options", "Page Display Options", "Metadata Options", "Parameters (Megamenu Extended)", "Fusion Menu Options", "Splitmenu Menu Options", "Module Assignment for this Menu Item"];

const Select = ({ w, children }: { w: number; children: React.ReactNode }) => (
  <SelectBox $w={w}>
    <SelectText>{children}</SelectText>
    <DropArrow><Tri w={8} h={4} c="#000" /></DropArrow>
  </SelectBox>
);

export default function App() {
  return (
    <Screen>
      <Global />
      <TitleBar>
        <FirefoxButton>Firefox <Tri w={7} h={5} c="#fff" /></FirefoxButton>
        {TABS.map((i) => (
          <Tab key={i} $active={i === 2}>
            <Favicon />
            <TabTitle>Sdar.com Staging...</TabTitle>
            <Cross />
          </Tab>
        ))}
        <NewTab><PlusIcon /></NewTab>
        <WindowControls>
          <ControlButton $w={29}><MinIcon /></ControlButton>
          <ControlButton $w={26}><RestoreIcon /></ControlButton>
          <ControlButton $w={47} $close><Cross c="#fff" s={11} /></ControlButton>
        </WindowControls>
      </TitleBar>

      <NavBar>
        <BackButton><BackArrow /></BackButton>
        <UrlField $w={781}>
          <Globe />
          <UrlText><Host>sdar.com</Host>/administrator/index.php?option=com_menus&amp;view=item&amp;layout=edit</UrlText>
          <UrlIcons>
            <Feather /><JoomlaLogo /><PhpBadge>php</PhpBadge><Wrench />
            <NavIcon $ml={2}><StarIcon /></NavIcon>
            <NavIcon $ml={3}><Tri w={10} h={7} c="#a9aeb5" /></NavIcon>
            <NavIcon $ml={3}><Reload /></NavIcon>
          </UrlIcons>
        </UrlField>
        <SearchField $w={237}>
          <GoogleIcon />
          <NavIcon $ml={3}><Tri w={6} h={4} c="#666" /></NavIcon>
          <SearchHint>Google</SearchHint>
          <Magnifier />
        </SearchField>
        <Home />
        <NavIcon $ml={20}><Bookmarks /></NavIcon>
        <NavIcon $ml={4}><Tri w={8} h={4} /></NavIcon>
        <NavIcon $ml={19}><Ruler /></NavIcon>
        <NavIcon $ml={20}><Fly /></NavIcon>
        <NavSep $ml={7} $mr={4} />
        <Tri w={8} h={4} />
        <NavIcon $ml={16}><SBadge>S</SBadge></NavIcon>
        <NavSep $ml={7} $mr={4} />
        <Tri w={8} h={4} />
      </NavBar>

      <DevBar>
        {DEV.map(([name, w, Icon]) => (
          <DevItem key={name} $w={w}>
            <Icon />
            <DevLabel>{name}</DevLabel>
            <Tri w={4} h={3} c="#000" />
          </DevItem>
        ))}
        <Checks><CheckIcon /><CheckIcon /><CheckIcon /></Checks>
      </DevBar>

      <Viewport>
        <Scroller>
          <PageBox>
            <Header>
              <MenuItemIcon />
              <PageTitle>Menu Manager: New Menu Item</PageTitle>
              <ToolButton $w={50}><SaveIcon />Save</ToolButton>
              <ToolButton $w={80}><Floppy />Save &amp; Close</ToolButton>
              <ToolButton $w={80}><Floppy plus />Save &amp; New</ToolButton>
              <ToolButton $w={48}><CancelIcon />Cancel</ToolButton>
              <ToolSep />
              <ToolButton $w={40}><HelpIcon />Help</ToolButton>
            </Header>
            <Main>
              <Details>
                <Legend>Details</Legend>
                <FormRow $h={27}>
                  <Label $req $ls={-0.05}>Menu Item Type<Star>*</Star></Label>
                  <TextBox $w={179} $req $muted>Single Article</TextBox>
                  <PlainButton>Select</PlainButton>
                </FormRow>
                <FormRow $h={32}><Label $req>Menu Title<Star>*</Star></Label><TextBox $w={309} $h={22} $req /></FormRow>
                <FormRow $h={27}><Label>Alias</Label><TextBox $w={179} /></FormRow>
                <FormRow $h={27}><Label>Note</Label><TextBox $w={179} /></FormRow>
                <FormRow $h={27}><Label>Link</Label><TextBox $w={219}>index.php?option=com_content&amp;view=article</TextBox></FormRow>
                <FormRow $h={27}><Label>Status</Label><Select w={85}>Published</Select></FormRow>
                <FormRow $h={27}><Label>Access</Label><Select w={77}>Public</Select></FormRow>
                <FormRow $h={27}><Label $req $ls={0.18}>Menu Location<Star>*</Star></Label><Select w={142}>Main Menu</Select></FormRow>
                <FormRow $h={27}><Label>Parent Item</Label><Select w={255}>Menu Item Root</Select></FormRow>
                <FormRow $h={26}><Label>Ordering</Label><Muted $ls={-0.1}>Ordering will be available after saving</Muted></FormRow>
                <FormRow $h={25}><Label>Target Window</Label><Select w={164}>Parent</Select></FormRow>
                <FormRow $h={31} $up={4}>
                  <Label>Default Page</Label>
                  <Radio $on /><RadioLabel $w={76}>No</RadioLabel>
                  <Radio /><RadioLabel $w={60}>Yes</RadioLabel>
                </FormRow>
                <FormRow $h={27}><Label>Language</Label><Select w={84}>All</Select></FormRow>
                <FormRow $h={27}><Label>Template Style</Label><Select w={165}>- Use Default -</Select></FormRow>
                <FormRow $h={26}><Label>ID</Label><Muted $ls={0} $pl={1}>0</Muted></FormRow>
              </Details>
              <Side>
                <Panel $open>
                  <PanelHead $open><Caret open /><PanelTitle>Required Settings</PanelTitle></PanelHead>
                  <PanelRow>
                    <Label $req $w={150} $ls={0}>Select Article<Star>*</Star></Label>
                    <TextBox $w={159} $muted>Select an Article</TextBox>
                    <RoundButton>Select / Change</RoundButton>
                  </PanelRow>
                </Panel>
                {PANELS.map((p) => (
                  <Panel key={p}><PanelHead><Caret /><PanelTitle>{p}</PanelTitle></PanelHead></Panel>
                ))}
              </Side>
            </Main>
          </PageBox>
          <Footer>
            <Version>Joomla! 2.5.7</Version>
            <License><Link>Joomla!®</Link> is free software released under the <Link>GNU General Public License</Link>.</License>
          </Footer>
        </Scroller>
        <ScrollBar>
          <ScrollEnd $h={121}><Tri w={7} h={4} up c="#444" /></ScrollEnd>
          <Thumb><Grip /></Thumb>
          <ScrollEnd $h={18}><Tri w={7} h={4} c="#444" /></ScrollEnd>
        </ScrollBar>
      </Viewport>

      <FindBar>
        <Cross s={8} />
        <FindText $w={50} $pl={15} $ls={-0.2}>Find:</FindText>
        <FindInput>dea</FindInput>
        <BlueArrow /><FindText $w={38} $pl={6}><u>N</u>ext</FindText>
        <BlueArrow up /><FindText $w={59} $pl={6}><u>P</u>revious</FindText>
        <Highlighter /><FindText $w={83} $pl={5} $ls={-0.1}>Highlight <u>a</u>ll</FindText>
        <CheckBox /><FindText $w={70}>Mat<u>c</u>h case</FindText>
      </FindBar>

      <TaskBar>
        <Start><StartOrb /></Start>
        <Task $w={158} $mr={4}><Chrome />Inbox - venkiveer...</Task>
        <Task $w={159}><FirefoxLogo />Deal Makers - Mo...</Task>
        <Task $w={159} $active><FirefoxLogo />Sdar.com Staging...</Task>
        <Explorer><FolderIcon /></Explorer>
        <Task $w={158} $mr={4}><SkypeBadge>S</SkypeBadge>Skype™ - venkiveer</Task>
        <Task $w={158}><FileZillaBadge>Fz</FileZillaBadge>scn - scni2652@s...</Task>
        <Tray>
          <Tri w={7} h={4} up c="#fff" />
          <TrayIcon $ml={13}><FlagIcon /></TrayIcon>
          <TrayIcon $ml={8}><PowerIcon /></TrayIcon>
          <TrayIcon $ml={11}><SignalIcon /></TrayIcon>
          <TrayIcon $ml={8}><DriveIcon /></TrayIcon>
          <Clock>12:58 AM<br />1/8/2013</Clock>
          <ShowDesktop />
        </Tray>
      </TaskBar>

      <Note $x={443} $y={162} $ls={0.18}>{"Create New Menu item with selecting\nmenu type as \"Single Article\""}</Note>
      <Note $x={378} $y={363} $ls={0.2}>Select Parent Item As "Upcoming Events"</Note>
      <Note $x={936} $y={137} $ls={0.12}>{"Select the Article you need to\nassign for this menu"}</Note>
      <Arrows width="1280" height="800">
        <g stroke="#ed1c24" strokeWidth="1.700"><path d="M396 205l26-18M351 429.500l49-37M1087 211l-19-24" /></g>
        <path fill="#ed1c24" d="M433 179l-17 2.500 11 11.500zM409.500 383l-17 3.500 12.500 12zM1060 176.500l14 7-10.500 8.500z" />
      </Arrows>
    </Screen>
  );
}
